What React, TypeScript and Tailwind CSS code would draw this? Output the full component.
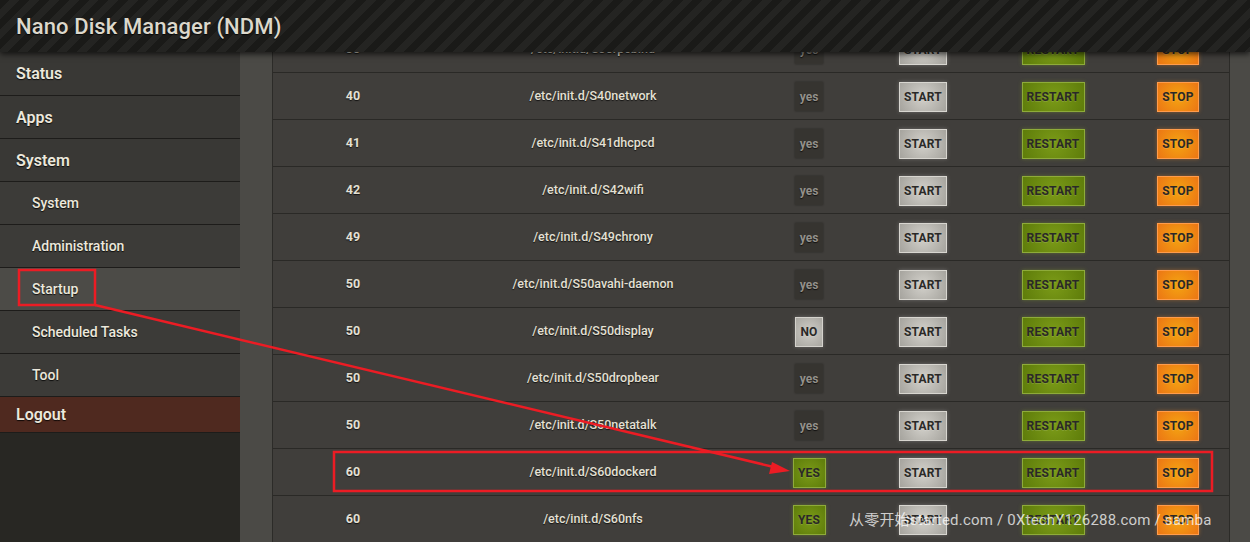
import React from "react";

type Row = { prio: string; path: string; enabled: "yes" | "NO" | "YES" };

const rows: Row[] = [
  { prio: "30", path: "/etc/init.d/S30rpcbind", enabled: "yes" },
  { prio: "40", path: "/etc/init.d/S40network", enabled: "yes" },
  { prio: "41", path: "/etc/init.d/S41dhcpcd", enabled: "yes" },
  { prio: "42", path: "/etc/init.d/S42wifi", enabled: "yes" },
  { prio: "49", path: "/etc/init.d/S49chrony", enabled: "yes" },
  { prio: "50", path: "/etc/init.d/S50avahi-daemon", enabled: "yes" },
  { prio: "50", path: "/etc/init.d/S50display", enabled: "NO" },
  { prio: "50", path: "/etc/init.d/S50dropbear", enabled: "yes" },
  { prio: "50", path: "/etc/init.d/S50netatalk", enabled: "yes" },
  { prio: "60", path: "/etc/init.d/S60dockerd", enabled: "YES" },
  { prio: "60", path: "/etc/init.d/S60nfs", enabled: "YES" },
];

const mainNav = ["Status", "Apps", "System"];
const subNav = ["System", "Administration", "Startup", "Scheduled Tasks", "Tool"];

const btnText =
  "flex items-center justify-center h-[30px] text-[12px] font-bold tracking-[0.2px] text-[#2a2927] [text-shadow:0_1px_0_rgba(255,255,255,0.15)]";

function EnabledBadge({ kind }: { kind: Row["enabled"] }) {
  if (kind === "yes") {
    return (
      <span className="flex h-[29px] w-[28px] items-center justify-center bg-[#363430] text-[12px] font-bold text-[#93908a] shadow-[0_0_2px_rgba(0,0,0,0.4)]">
        yes
      </span>
    );
  }
  if (kind === "NO") {
    return (
      <span
        className={`${btnText} w-[28px] border border-[#d4d2cc] bg-[radial-gradient(circle,#cfcdc7_0%,#a9a7a1_100%)] shadow-[0_0_4px_rgba(255,255,255,0.25)]`}
      >
        NO
      </span>
    );
  }
  return (
    <span
      className={`${btnText} w-[33px] border border-[#8eab3a] bg-[radial-gradient(circle,#7b9b18_0%,#5e7c0a_100%)] shadow-[0_0_4px_rgba(150,190,40,0.35)]`}
    >
      YES
    </span>
  );
}

function TableRow({ row }: { row: Row }) {
  return (
    <div className="grid h-[47px] grid-cols-[160px_320px_112px_116px_144px_106px] items-center border-b border-[#2a2926] pt-[1px] text-[#e4e0d4] [text-shadow:0_1px_1px_rgba(0,0,0,0.7)]">
      <div className="text-center text-[12.5px] font-bold">{row.prio}</div>
      <div className="text-center text-[12.5px] font-medium">{row.path}</div>
      <div className="flex justify-center">
        <EnabledBadge kind={row.enabled} />
      </div>
      <div className="flex justify-center">
        <button
          className={`${btnText} w-[48px] border border-[#d8d6d0] bg-[radial-gradient(circle,#d3d1cb_0%,#a5a39d_100%)] shadow-[0_0_4px_rgba(255,255,255,0.25)]`}
        >
          START
        </button>
      </div>
      <div className="flex justify-center">
        <button
          className={`${btnText} w-[63px] border border-[#8eab3a] bg-[radial-gradient(circle,#7b9b18_0%,#5e7c0a_100%)] shadow-[0_0_4px_rgba(150,190,40,0.35)]`}
        >
          RESTART
        </button>
      </div>
      <div className="flex justify-center">
        <button
          className={`${btnText} w-[42px] border border-[#ff9c4c] bg-[radial-gradient(circle,#f4a412_0%,#ec7614_100%)] shadow-[0_0_4px_rgba(255,140,40,0.4)]`}
        >
          STOP
        </button>
      </div>
    </div>
  );
}

export default function App() {
  return (
    <div className="relative h-[542px] w-[1250px] overflow-hidden bg-[#282723] font-['Roboto','Noto_Sans_CJK_SC',sans-serif]">
      {/* top bar */}
      <header className="relative z-10 flex h-[52px] items-center bg-[repeating-linear-gradient(135deg,#1a1a18_0px,#1a1a18_7px,#242422_7px,#242422_14px)] pl-[16px] shadow-[0_2px_6px_rgba(0,0,0,0.7)]">
        <h1 className="text-[22px] font-medium tracking-[0.1px] text-[#dcd8cc] [text-shadow:0_1px_1px_rgba(0,0,0,0.8)]">
          Nano Disk Manager (NDM)
        </h1>
      </header>

      <div className="flex h-[490px]">
        {/* side navigation */}
        <nav className="flex w-[240px] shrink-0 flex-col bg-[#282723] text-[#ece8dc] [text-shadow:0_1px_1px_rgba(0,0,0,0.8)]">
          {mainNav.map((label, i) => (
            <div
              key={label}
              className={`flex ${i === 0 ? "h-[44px]" : "h-[43px]"} items-center border-b border-[#1d1c1a] bg-[#393835] pl-[16px] pt-[1px] text-[16px] font-semibold`}
            >
              {label}
            </div>
          ))}
          {subNav.map((label) => (
            <div
              key={label}
              className={`flex h-[43px] items-center border-b border-[#1d1c1a] pl-[32px] text-[14px] font-medium ${
                label === "Startup" ? "bg-[#4c4b47]" : "bg-[#3c3b38]"
              }`}
            >
              {label}
            </div>
          ))}
          <div className="flex h-[36px] items-center border-b border-[#1d1c1a] bg-[#4f291f] pl-[16px] text-[16px] font-semibold">
            Logout
          </div>
        </nav>

        {/* startup scripts table */}
        <main className="flex-1 overflow-hidden bg-[#4b4a46] pl-[32px] pr-[20px]">
          <div className="-mt-[26px] border-x border-[#2c2b28] bg-[#403e3b]">
            {rows.map((r, i) => (
              <TableRow key={i} row={r} />
            ))}
          </div>
        </main>
      </div>

      {/* annotation marks */}
      <svg
        className="pointer-events-none absolute left-0 top-0 z-20"
        width="1250"
        height="542"
        viewBox="0 0 1250 542"
      >
        <rect x="19" y="270" width="76" height="35" fill="none" stroke="#ec1c24" strokeWidth="2.5" />
        <rect x="334" y="452" width="878" height="39" fill="none" stroke="#ec1c24" strokeWidth="2.5" />
        <line x1="95" y1="305" x2="778" y2="468" stroke="#ec1c24" strokeWidth="2.5" />
        <polygon points="790,471 772,462 769,474" fill="#ec1c24" />
      </svg>

      {/* watermark */}
      <div className="pointer-events-none absolute left-[849px] top-[509px] z-20 text-[15px] tracking-[0.2px] text-white/75">
        从零开始started.com / 0XtechY126288.com / samba
      </div>
    </div>
  );
}
